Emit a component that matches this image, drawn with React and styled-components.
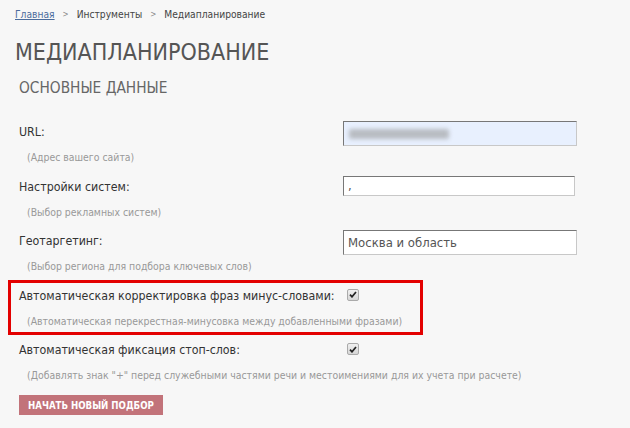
import styled, { createGlobalStyle } from 'styled-components';

const GlobalStyle = createGlobalStyle`
    html, body {
        margin: 0;
        padding: 0;
        background: #f7f7f7;
    }
    body {
        font-family: "DejaVu Sans Condensed", "DejaVu Sans", sans-serif;
        color: #333;
    }
`

const Page = styled.div`
    width: 630px;
    height: 428px;
    padding: 8px 0 0 15px;
    box-sizing: border-box;
    overflow: hidden;
`
const Breadcrumbs = styled.div`
    display: flex;
    align-items: center;
    font-size: 10.2px;
    line-height: 14px;
    color: #444;
`
const Crumb = styled.a`
    color: #4b6c9c;
    text-decoration: underline;
`
const Sep = styled.span`
    font-size: 8px;
    color: #888;
    margin: 0 8px 0 8px;
`
const Title = styled.h1`
    margin: 16px 0 0;
    font-size: 23px;
    line-height: 28px;
    font-weight: normal;
    color: #555;
    text-transform: uppercase;
`
const SectionTitle = styled.h2`
    margin: 13px 0 0 4px;
    font-size: 15.3px;
    line-height: 18px;
    font-weight: normal;
    color: #666;
    text-transform: uppercase;
`
const Form = styled.div`
    margin-top: 24px;
    padding-left: 4px;
`
const Row = styled.div`
    position: relative;
    display: flex;
    align-items: flex-start;
    height: 54.5px;

    ${props => props.$highlight && `
        &::after {
            content: "";
            position: absolute;
            left: -11px;
            top: -5px;
            width: 409px;
            height: 49px;
            border: 3px solid #e30000;
            pointer-events: none;
        }
    `}
`
const LabelCol = styled.div`
    width: 324px;
    flex-shrink: 0;
    padding-top: 2px;
`
const Label = styled.div`
    font-size: 12.3px;
    line-height: 18px;
    color: #333;
    white-space: nowrap;
`
const Hint = styled.div`
    margin: 9px 0 0 8px;
    font-size: 10.4px;
    line-height: 14px;
    color: #999;
    white-space: nowrap;
`
const Input = styled.div`
    box-sizing: border-box;
    width: ${props => props.$width || 234}px;
    height: ${props => props.$height || 25}px;
    background: ${props => props.$autofill ? '#e8f0fe' : '#fff'};
    border: 1px solid #c8c8c8;
    border-top-color: #777;
    border-left-color: #777;
    padding: 0 4px;
    display: flex;
    align-items: center;
    font-size: 13px;
    color: #555;
`
const Blur = styled.span`
    display: block;
    width: 100px;
    height: 10px;
    margin-left: 1px;
    background: #b8bcc2;
    filter: blur(2px);
    border-radius: 2px;
`
const Check = styled.span`
    display: flex;
    align-items: center;
    justify-content: center;
    width: 10px;
    height: 10px;
    margin: 4px 0 0 4px;
    border: 1px solid #aaa;
    border-radius: 2px;
    background: linear-gradient(#f0f0f0, #d6d6d6);
`
const Button = styled.button`
    margin-top: 0;
    height: 20px;
    padding: 0 9px;
    border: none;
    background: #c2737a;
    color: #fff;
    font-family: inherit;
    font-size: 9.6px;
    font-weight: bold;
    text-transform: uppercase;
    cursor: pointer;
`

const CheckIcon = () => (
    <svg width="8" height="7" viewBox="0 0 8 7">
        <path d="M1 3.6 L3 5.8 L7 1" fill="none" stroke="#222" strokeWidth="1.7" />
    </svg>
)

const rows = [
    { label: 'URL:', hint: '(Адрес вашего сайта)', control: <Input $autofill><Blur /></Input> },
    { label: 'Настройки систем:', hint: '(Выбор рекламных систем)', control: <Input $width={232} $height={20}>,</Input> },
    { label: 'Геотаргетинг:', hint: '(Выбор региона для подбора ключевых слов)', control: <Input>Москва и область</Input> },
    { label: 'Автоматическая корректировка фраз минус-словами:', hint: '(Автоматическая перекрестная-минусовка между добавленными фразами)', control: <Check><CheckIcon /></Check>, highlight: true },
    { label: 'Автоматическая фиксация стоп-слов:', hint: '(Добавлять знак "+" перед служебными частями речи и местоимениями для их учета при расчете)', control: <Check><CheckIcon /></Check> },
]

const App = () => {
    return (
        <Page>
            <GlobalStyle />
            <Breadcrumbs>
                <Crumb>Главная</Crumb>
                <Sep>&gt;</Sep>
                <span>Инструменты</span>
                <Sep>&gt;</Sep>
                <span>Медиапланирование</span>
            </Breadcrumbs>
            <Title>Медиапланирование</Title>
            <SectionTitle>Основные данные</SectionTitle>
            <Form>
                {rows.map(row => (
                    <Row key={row.label} $highlight={row.highlight}>
                        <LabelCol>
                            <Label>{row.label}</Label>
                            <Hint>{row.hint}</Hint>
                        </LabelCol>
                        {row.control}
                    </Row>
                ))}
                <Button>Начать новый подбор</Button>
            </Form>
        </Page>
    )
}

export default App;
